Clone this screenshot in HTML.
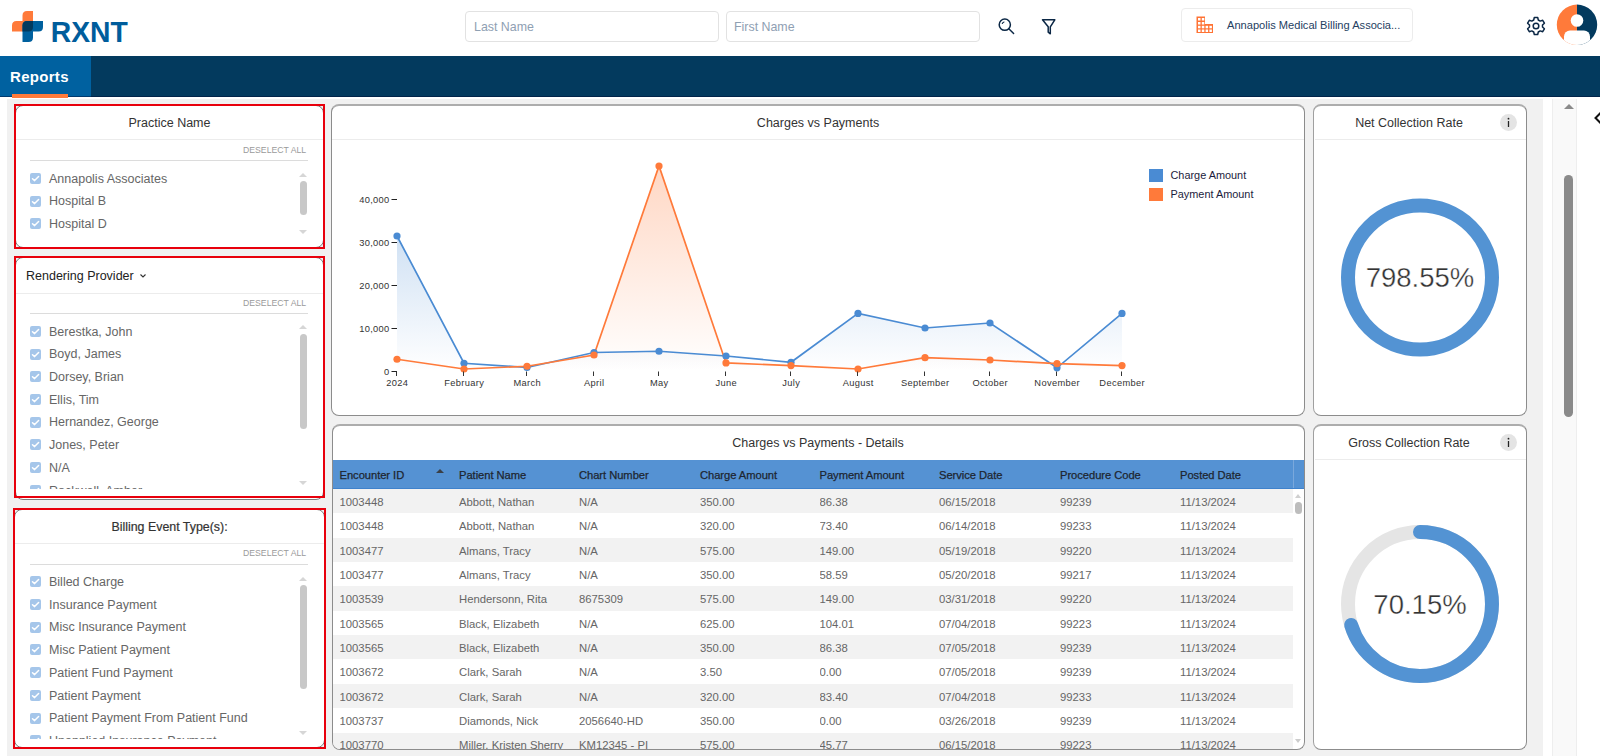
<!DOCTYPE html>
<html><head><meta charset="utf-8">
<style>
*{box-sizing:border-box;margin:0;padding:0}
html,body{width:1600px;height:756px;overflow:hidden;background:#fff;font-family:"Liberation Sans",sans-serif;color:#333;position:relative}
.a{position:absolute}
.t{position:absolute;white-space:nowrap;line-height:1}
#nav{left:0;top:56px;width:1600px;height:41px;background:#033a5e}
#tab{left:0;top:56px;width:91px;height:41px;background:#0061a0}
#content{left:7px;top:99px;width:1536px;height:657px;background:#f1f1f1}
.inp{border:1px solid #e2e2e2;border-radius:4px;background:#fff}
.card{position:absolute;background:#fff;border:1px solid #8c8c8c;border-top:2px solid #adadad;border-radius:8px;overflow:hidden}
.sep{position:absolute;height:1px;background:#ececec}
.red{position:absolute;border:2px solid #e8000c}
.ttl{position:absolute;white-space:nowrap;line-height:1;font-size:12.5px;color:#333}
.desel{position:absolute;white-space:nowrap;line-height:1;font-size:8.7px;color:#9a9a9a}
.cb{position:absolute;width:11px;height:11px;border-radius:2px;background:#a5c6ea}
.cb svg{position:absolute;left:0;top:0}
.li{position:absolute;white-space:nowrap;line-height:1;font-size:12.5px;color:#666}
.sbt{position:absolute;width:7px;border-radius:4px;background:#c8c8c8}
.arr{position:absolute;width:0;height:0;border-left:4px solid transparent;border-right:4px solid transparent}
.up{border-bottom:4px solid #d6d6d6}
.dn{border-top:4px solid #d6d6d6}
</style></head><body>
<!-- header -->
<svg class="a" style="left:0;top:0" width="140" height="56" viewBox="0 0 140 56">
  <path d="M22.5 15.5 Q22.5 11 27 11 H33 V27 Q33 31.6 28.5 31.6 H12 V25.5 Q12 21 16.5 21 H22.5 Z" fill="#ff7a3a"/>
  <path d="M22.5 25.5 Q22.5 21 27 21 H43 V27 Q43 31.6 38.5 31.6 H33 V37.5 Q33 42 28.5 42 H22.5 Z" fill="#00609e"/>
  <path d="M22.5 25.5 Q22.5 21 27 21 H33 V27 Q33 31.6 28.5 31.6 H22.5 Z" fill="#033a5e"/>
  <text transform="translate(50.8 42) scale(1 1.05)" x="0" y="0" font-family="Liberation Sans" font-weight="700" font-size="28.3" fill="#005d9c">RXNT</text>
</svg>
<div class="a inp" style="left:465px;top:11px;width:254px;height:31px"></div>
<div class="t" style="left:474px;top:21px;font-size:12.4px;color:#8fa0b3">Last Name</div>
<div class="a inp" style="left:726px;top:11px;width:254px;height:31px"></div>
<div class="t" style="left:734px;top:21px;font-size:12.4px;color:#8fa0b3">First Name</div>
<svg class="a" style="left:995px;top:15px" width="24" height="24" viewBox="0 0 24 24">
  <circle cx="9.8" cy="9.7" r="5.6" fill="none" stroke="#0b2745" stroke-width="1.5"/>
  <path d="M13.8 13.8 L18.6 18.5" stroke="#0b2745" stroke-width="1.5" stroke-linecap="round"/>
  <path d="M7.3 8.5 Q7.8 7.3 9 7" fill="none" stroke="#0b2745" stroke-width="1.1" stroke-linecap="round"/>
</svg>
<svg class="a" style="left:1038px;top:15px" width="24" height="24" viewBox="0 0 24 24">
  <path d="M4.5 4.8 H16.8 L12.3 11.8 V18.8 L10.2 17.2 V11.8 Z" fill="none" stroke="#0b2745" stroke-width="1.5" stroke-linejoin="round"/>
</svg>
<div class="a inp" style="left:1181px;top:8px;width:232px;height:34px;border-color:#ececec"></div>
<svg class="a" style="left:1196px;top:16px" width="18" height="18" viewBox="0 0 18 18">
  <path d="M0.5 0.5 H9 V8 H17 V17 H0.5 Z" fill="#ff7334"/>
  <g fill="#fff">
    <rect x="2" y="2" width="2.5" height="2.5"/><rect x="5.8" y="2" width="2.5" height="2.5"/>
    <rect x="2" y="6" width="2.5" height="2.5"/><rect x="5.8" y="6" width="2.5" height="2.5"/>
    <rect x="2" y="9.8" width="2.5" height="2.5"/><rect x="5.8" y="9.8" width="2.5" height="2.5"/><rect x="9.6" y="9.8" width="2.5" height="2.5"/><rect x="13.4" y="9.8" width="2.5" height="2.5"/>
    <rect x="2" y="13.5" width="2.5" height="2.5"/><rect x="5.8" y="13.5" width="2.5" height="2.5"/><rect x="9.6" y="13.5" width="2.5" height="2.5"/><rect x="13.4" y="13.5" width="2.5" height="2.5"/>
  </g>
</svg>
<div class="t" style="left:1227px;top:20px;font-size:11.1px;color:#24405f">Annapolis Medical Billing Associa...</div>
<svg class="a" style="left:1524px;top:14px" width="24" height="24" viewBox="0 0 24 24">
  <g fill="none" stroke="#0b2745" stroke-width="1.5" stroke-linejoin="round">
    <path d="M10.3 3.5 H13.7 L14.3 6 L16.2 7.1 L18.7 6.3 L20.4 9.2 L18.5 11 V13 L20.4 14.8 L18.7 17.7 L16.2 16.9 L14.3 18 L13.7 20.5 H10.3 L9.7 18 L7.8 16.9 L5.3 17.7 L3.6 14.8 L5.5 13 V11 L3.6 9.2 L5.3 6.3 L7.8 7.1 L9.7 6 Z"/>
    <circle cx="12" cy="12" r="2.8"/>
  </g>
</svg>
<svg class="a" style="left:1556px;top:4px" width="42" height="42" viewBox="0 0 42 42">
  <defs><clipPath id="avc"><circle cx="21" cy="20.8" r="20.2"/></clipPath></defs>
  <g clip-path="url(#avc)">
    <rect x="0" y="0" width="21" height="42" fill="#ff7a3a"/>
    <rect x="21" y="0" width="21" height="42" fill="#033a5e"/>
    <circle cx="21" cy="16.5" r="6.3" fill="#fff"/>
    <rect x="8" y="26.5" width="26" height="20" rx="6" fill="#fff"/>
  </g>
</svg>
<!-- nav -->
<div class="a" id="nav"></div>
<div class="a" id="tab"></div>
<div class="t" style="left:10px;top:69px;font-size:15px;font-weight:700;color:#fff;letter-spacing:0.3px">Reports</div>
<div class="a" style="left:0;top:95.5px;width:1600px;height:1.5px;background:rgba(0,10,50,0.45)"></div>
<div class="a" style="left:12px;top:94px;width:56px;height:3.5px;background:#ff7a3a"></div>
<!-- content bg -->
<div class="a" id="content"></div>
<div class="a" style="left:1552px;top:99px;width:25px;height:657px;background:#f9f9f9;border-left:1px solid #eeeeee;border-right:1px solid #eeeeee"></div>
<div class="arr up" style="left:1564px;top:104px;border-bottom-color:#8a8a8a;border-left-width:5px;border-right-width:5px;border-bottom-width:5px"></div>
<div class="a" style="left:1564px;top:175px;width:9px;height:242px;border-radius:5px;background:#8a8a8a"></div>
<svg class="a" style="left:1590px;top:110px" width="10" height="16" viewBox="0 0 10 16"><path d="M11 2.5 L5.5 8 L11 13.5" fill="none" stroke="#111" stroke-width="2"/></svg>

<!-- LEFT PANELS -->
<div class="card" style="left:15px;top:105px;width:309px;height:142.5px;border-color:#7d7d7d;border-top-width:1px"></div><div class="ttl" style="left:14px;width:311px;text-align:center;top:117px">Practice Name</div><div class="sep" style="left:16px;top:139.0px;width:307px"></div><div class="desel" style="left:243px;top:145.7px">DESELECT ALL</div><div class="sep" style="left:30px;top:159.9px;width:278px;background:#dcdcdc"></div><div class="a" style="left:14px;top:161px;width:280px;height:77px;overflow:hidden"><div class="cb" style="left:16px;top:11.80px"><svg width="11" height="11" viewBox="0 0 11 11" style="position:absolute;left:0;top:0"><path d="M2.5 5.7 L4.6 7.6 L8.6 3.5" fill="none" stroke="#fff" stroke-width="1.5" stroke-linecap="round" stroke-linejoin="round"/></svg></div><div class="li" style="left:35px;top:11.50px">Annapolis Associates</div><div class="cb" style="left:16px;top:34.50px"><svg width="11" height="11" viewBox="0 0 11 11" style="position:absolute;left:0;top:0"><path d="M2.5 5.7 L4.6 7.6 L8.6 3.5" fill="none" stroke="#fff" stroke-width="1.5" stroke-linecap="round" stroke-linejoin="round"/></svg></div><div class="li" style="left:35px;top:34.20px">Hospital B</div><div class="cb" style="left:16px;top:57.20px"><svg width="11" height="11" viewBox="0 0 11 11" style="position:absolute;left:0;top:0"><path d="M2.5 5.7 L4.6 7.6 L8.6 3.5" fill="none" stroke="#fff" stroke-width="1.5" stroke-linecap="round" stroke-linejoin="round"/></svg></div><div class="li" style="left:35px;top:56.90px">Hospital D</div></div><div class="arr up" style="left:299px;top:173px"></div><div class="arr dn" style="left:299px;top:230px"></div><div class="sbt" style="left:300px;top:181px;height:34px"></div><div class="red" style="left:14px;top:104px;width:311px;height:144.5px"></div><div class="card" style="left:14.5px;top:257px;width:309.5px;height:243px;border-color:#7d7d7d;border-top-width:1px"></div><div class="ttl" style="left:26px;top:270px;color:#222">Rendering Provider</div><svg class="a" style="left:139px;top:273px" width="8" height="6" viewBox="0 0 8 6"><path d="M1.5 1.5 L4 4 L6.5 1.5" fill="none" stroke="#333" stroke-width="1.1"/></svg><div class="sep" style="left:15.5px;top:292.8px;width:307.5px"></div><div class="desel" style="left:243px;top:299px">DESELECT ALL</div><div class="sep" style="left:30px;top:313.0px;width:278px;background:#dcdcdc"></div><div class="a" style="left:14px;top:313px;width:280px;height:175.60000000000002px;overflow:hidden"><div class="cb" style="left:16px;top:12.90px"><svg width="11" height="11" viewBox="0 0 11 11" style="position:absolute;left:0;top:0"><path d="M2.5 5.7 L4.6 7.6 L8.6 3.5" fill="none" stroke="#fff" stroke-width="1.5" stroke-linecap="round" stroke-linejoin="round"/></svg></div><div class="li" style="left:35px;top:12.60px">Berestka, John</div><div class="cb" style="left:16px;top:35.60px"><svg width="11" height="11" viewBox="0 0 11 11" style="position:absolute;left:0;top:0"><path d="M2.5 5.7 L4.6 7.6 L8.6 3.5" fill="none" stroke="#fff" stroke-width="1.5" stroke-linecap="round" stroke-linejoin="round"/></svg></div><div class="li" style="left:35px;top:35.30px">Boyd, James</div><div class="cb" style="left:16px;top:58.30px"><svg width="11" height="11" viewBox="0 0 11 11" style="position:absolute;left:0;top:0"><path d="M2.5 5.7 L4.6 7.6 L8.6 3.5" fill="none" stroke="#fff" stroke-width="1.5" stroke-linecap="round" stroke-linejoin="round"/></svg></div><div class="li" style="left:35px;top:58.00px">Dorsey, Brian</div><div class="cb" style="left:16px;top:81.00px"><svg width="11" height="11" viewBox="0 0 11 11" style="position:absolute;left:0;top:0"><path d="M2.5 5.7 L4.6 7.6 L8.6 3.5" fill="none" stroke="#fff" stroke-width="1.5" stroke-linecap="round" stroke-linejoin="round"/></svg></div><div class="li" style="left:35px;top:80.70px">Ellis, Tim</div><div class="cb" style="left:16px;top:103.70px"><svg width="11" height="11" viewBox="0 0 11 11" style="position:absolute;left:0;top:0"><path d="M2.5 5.7 L4.6 7.6 L8.6 3.5" fill="none" stroke="#fff" stroke-width="1.5" stroke-linecap="round" stroke-linejoin="round"/></svg></div><div class="li" style="left:35px;top:103.40px">Hernandez, George</div><div class="cb" style="left:16px;top:126.40px"><svg width="11" height="11" viewBox="0 0 11 11" style="position:absolute;left:0;top:0"><path d="M2.5 5.7 L4.6 7.6 L8.6 3.5" fill="none" stroke="#fff" stroke-width="1.5" stroke-linecap="round" stroke-linejoin="round"/></svg></div><div class="li" style="left:35px;top:126.10px">Jones, Peter</div><div class="cb" style="left:16px;top:149.10px"><svg width="11" height="11" viewBox="0 0 11 11" style="position:absolute;left:0;top:0"><path d="M2.5 5.7 L4.6 7.6 L8.6 3.5" fill="none" stroke="#fff" stroke-width="1.5" stroke-linecap="round" stroke-linejoin="round"/></svg></div><div class="li" style="left:35px;top:148.80px">N/A</div><div class="cb" style="left:16px;top:171.80px"><svg width="11" height="11" viewBox="0 0 11 11" style="position:absolute;left:0;top:0"><path d="M2.5 5.7 L4.6 7.6 L8.6 3.5" fill="none" stroke="#fff" stroke-width="1.5" stroke-linecap="round" stroke-linejoin="round"/></svg></div><div class="li" style="left:35px;top:171.50px">Rockwell, Amber</div><div class="cb" style="left:16px;top:194.50px"><svg width="11" height="11" viewBox="0 0 11 11" style="position:absolute;left:0;top:0"><path d="M2.5 5.7 L4.6 7.6 L8.6 3.5" fill="none" stroke="#fff" stroke-width="1.5" stroke-linecap="round" stroke-linejoin="round"/></svg></div><div class="li" style="left:35px;top:194.20px">Smith, John</div></div><div class="arr up" style="left:299px;top:325px"></div><div class="arr dn" style="left:299px;top:480.6px"></div><div class="sbt" style="left:300px;top:334px;height:95px"></div><div class="red" style="left:13.5px;top:256px;width:311.5px;height:242px"></div><div class="card" style="left:14px;top:509px;width:311px;height:239px;border-color:#7d7d7d;border-top-width:1px"></div><div class="ttl" style="left:13px;width:313px;text-align:center;top:520.7px;font-size:12.4px;-webkit-text-stroke:0.2px #333">Billing Event Type(s):</div><div class="sep" style="left:15px;top:542.7px;width:309px"></div><div class="desel" style="left:243px;top:549.1px">DESELECT ALL</div><div class="sep" style="left:30px;top:563.5px;width:278px;background:#dcdcdc"></div><div class="a" style="left:14px;top:565px;width:280px;height:174px;overflow:hidden"><div class="cb" style="left:16px;top:11.30px"><svg width="11" height="11" viewBox="0 0 11 11" style="position:absolute;left:0;top:0"><path d="M2.5 5.7 L4.6 7.6 L8.6 3.5" fill="none" stroke="#fff" stroke-width="1.5" stroke-linecap="round" stroke-linejoin="round"/></svg></div><div class="li" style="left:35px;top:11.00px">Billed Charge</div><div class="cb" style="left:16px;top:34.00px"><svg width="11" height="11" viewBox="0 0 11 11" style="position:absolute;left:0;top:0"><path d="M2.5 5.7 L4.6 7.6 L8.6 3.5" fill="none" stroke="#fff" stroke-width="1.5" stroke-linecap="round" stroke-linejoin="round"/></svg></div><div class="li" style="left:35px;top:33.70px">Insurance Payment</div><div class="cb" style="left:16px;top:56.70px"><svg width="11" height="11" viewBox="0 0 11 11" style="position:absolute;left:0;top:0"><path d="M2.5 5.7 L4.6 7.6 L8.6 3.5" fill="none" stroke="#fff" stroke-width="1.5" stroke-linecap="round" stroke-linejoin="round"/></svg></div><div class="li" style="left:35px;top:56.40px">Misc Insurance Payment</div><div class="cb" style="left:16px;top:79.40px"><svg width="11" height="11" viewBox="0 0 11 11" style="position:absolute;left:0;top:0"><path d="M2.5 5.7 L4.6 7.6 L8.6 3.5" fill="none" stroke="#fff" stroke-width="1.5" stroke-linecap="round" stroke-linejoin="round"/></svg></div><div class="li" style="left:35px;top:79.10px">Misc Patient Payment</div><div class="cb" style="left:16px;top:102.10px"><svg width="11" height="11" viewBox="0 0 11 11" style="position:absolute;left:0;top:0"><path d="M2.5 5.7 L4.6 7.6 L8.6 3.5" fill="none" stroke="#fff" stroke-width="1.5" stroke-linecap="round" stroke-linejoin="round"/></svg></div><div class="li" style="left:35px;top:101.80px">Patient Fund Payment</div><div class="cb" style="left:16px;top:124.80px"><svg width="11" height="11" viewBox="0 0 11 11" style="position:absolute;left:0;top:0"><path d="M2.5 5.7 L4.6 7.6 L8.6 3.5" fill="none" stroke="#fff" stroke-width="1.5" stroke-linecap="round" stroke-linejoin="round"/></svg></div><div class="li" style="left:35px;top:124.50px">Patient Payment</div><div class="cb" style="left:16px;top:147.50px"><svg width="11" height="11" viewBox="0 0 11 11" style="position:absolute;left:0;top:0"><path d="M2.5 5.7 L4.6 7.6 L8.6 3.5" fill="none" stroke="#fff" stroke-width="1.5" stroke-linecap="round" stroke-linejoin="round"/></svg></div><div class="li" style="left:35px;top:147.20px">Patient Payment From Patient Fund</div><div class="cb" style="left:16px;top:170.20px"><svg width="11" height="11" viewBox="0 0 11 11" style="position:absolute;left:0;top:0"><path d="M2.5 5.7 L4.6 7.6 L8.6 3.5" fill="none" stroke="#fff" stroke-width="1.5" stroke-linecap="round" stroke-linejoin="round"/></svg></div><div class="li" style="left:35px;top:169.90px">Unapplied Insurance Payment</div><div class="cb" style="left:16px;top:192.90px"><svg width="11" height="11" viewBox="0 0 11 11" style="position:absolute;left:0;top:0"><path d="M2.5 5.7 L4.6 7.6 L8.6 3.5" fill="none" stroke="#fff" stroke-width="1.5" stroke-linecap="round" stroke-linejoin="round"/></svg></div><div class="li" style="left:35px;top:192.60px">Other</div></div><div class="arr up" style="left:299px;top:577px"></div><div class="arr dn" style="left:299px;top:731px"></div><div class="sbt" style="left:300px;top:585px;height:104px"></div><div class="red" style="left:13px;top:508px;width:313px;height:241px"></div>
<!-- CHART CARD -->
<div class="card" style="left:331px;top:104px;width:974px;height:312px"></div><div class="ttl" style="left:331px;width:974px;text-align:center;top:117px">Charges vs Payments</div><div class="sep" style="left:332px;top:139px;width:972px"></div><svg class="a" style="left:0;top:0" width="1600" height="756" viewBox="0 0 1600 756"><defs><linearGradient id="gb" x1="0" y1="0" x2="0" y2="1"><stop offset="0" stop-color="#4a8bd3" stop-opacity="0.26"/><stop offset="1" stop-color="#4a8bd3" stop-opacity="0"/></linearGradient><linearGradient id="go" x1="0" y1="0" x2="0" y2="1"><stop offset="0" stop-color="#ff7a3a" stop-opacity="0.3"/><stop offset="1" stop-color="#ff7a3a" stop-opacity="0"/></linearGradient></defs><polygon points="397,371 397,236 464,363.25 527,367.5 594,352.5 659,351.25 726,356 791,362.3 858,313.4 925,328 990,323 1057,367.8 1122,313.4 1122,371" fill="url(#gb)"/><polygon points="397,371 397,359.25 464,369 527,366.25 594,355 659,166 726,362.9 791,365.6 858,369 925,357.7 990,360 1057,363.7 1122,365.6 1122,371" fill="url(#go)"/><polyline points="397,236 464,363.25 527,367.5 594,352.5 659,351.25 726,356 791,362.3 858,313.4 925,328 990,323 1057,367.8 1122,313.4" fill="none" stroke="#4a8bd3" stroke-width="1.7"/><polyline points="397,359.25 464,369 527,366.25 594,355 659,166 726,362.9 791,365.6 858,369 925,357.7 990,360 1057,363.7 1122,365.6" fill="none" stroke="#ff7a3a" stroke-width="1.7"/><circle cx="397" cy="236" r="3.6" fill="#4a8bd3"/><circle cx="464" cy="363.25" r="3.6" fill="#4a8bd3"/><circle cx="527" cy="367.5" r="3.6" fill="#4a8bd3"/><circle cx="594" cy="352.5" r="3.6" fill="#4a8bd3"/><circle cx="659" cy="351.25" r="3.6" fill="#4a8bd3"/><circle cx="726" cy="356" r="3.6" fill="#4a8bd3"/><circle cx="791" cy="362.3" r="3.6" fill="#4a8bd3"/><circle cx="858" cy="313.4" r="3.6" fill="#4a8bd3"/><circle cx="925" cy="328" r="3.6" fill="#4a8bd3"/><circle cx="990" cy="323" r="3.6" fill="#4a8bd3"/><circle cx="1057" cy="367.8" r="3.6" fill="#4a8bd3"/><circle cx="1122" cy="313.4" r="3.6" fill="#4a8bd3"/><circle cx="397" cy="359.25" r="3.6" fill="#ff7a3a"/><circle cx="464" cy="369" r="3.6" fill="#ff7a3a"/><circle cx="527" cy="366.25" r="3.6" fill="#ff7a3a"/><circle cx="594" cy="355" r="3.6" fill="#ff7a3a"/><circle cx="659" cy="166" r="3.6" fill="#ff7a3a"/><circle cx="726" cy="362.9" r="3.6" fill="#ff7a3a"/><circle cx="791" cy="365.6" r="3.6" fill="#ff7a3a"/><circle cx="858" cy="369" r="3.6" fill="#ff7a3a"/><circle cx="925" cy="357.7" r="3.6" fill="#ff7a3a"/><circle cx="990" cy="360" r="3.6" fill="#ff7a3a"/><circle cx="1057" cy="363.7" r="3.6" fill="#ff7a3a"/><circle cx="1122" cy="365.6" r="3.6" fill="#ff7a3a"/><line x1="391.5" y1="371.5" x2="397" y2="371.5" stroke="#222" stroke-width="1"/><text x="389.5" y="374.55" text-anchor="end" font-family="Liberation Sans" font-size="9.3" letter-spacing="0.3" fill="#333">0</text><line x1="391.5" y1="328.5" x2="397" y2="328.5" stroke="#222" stroke-width="1"/><text x="389.5" y="331.55" text-anchor="end" font-family="Liberation Sans" font-size="9.3" letter-spacing="0.3" fill="#333">10,000</text><line x1="391.5" y1="285.5" x2="397" y2="285.5" stroke="#222" stroke-width="1"/><text x="389.5" y="288.55" text-anchor="end" font-family="Liberation Sans" font-size="9.3" letter-spacing="0.3" fill="#333">20,000</text><line x1="391.5" y1="242.5" x2="397" y2="242.5" stroke="#222" stroke-width="1"/><text x="389.5" y="245.55" text-anchor="end" font-family="Liberation Sans" font-size="9.3" letter-spacing="0.3" fill="#333">30,000</text><line x1="391.5" y1="199.5" x2="397" y2="199.5" stroke="#222" stroke-width="1"/><text x="389.5" y="202.55" text-anchor="end" font-family="Liberation Sans" font-size="9.3" letter-spacing="0.3" fill="#333">40,000</text><path d="M396.5 371.5 V376" stroke="#222" stroke-width="1"/><line x1="396.5" y1="371.5" x2="396.5" y2="376" stroke="#333" stroke-width="1"/><text x="397.2" y="386" text-anchor="middle" font-family="Liberation Sans" font-size="9.3" letter-spacing="0.35" fill="#333">2024</text><line x1="463.5" y1="371.5" x2="463.5" y2="376" stroke="#333" stroke-width="1"/><text x="464.2" y="386" text-anchor="middle" font-family="Liberation Sans" font-size="9.3" letter-spacing="0.35" fill="#333">February</text><line x1="526.5" y1="371.5" x2="526.5" y2="376" stroke="#333" stroke-width="1"/><text x="527.2" y="386" text-anchor="middle" font-family="Liberation Sans" font-size="9.3" letter-spacing="0.35" fill="#333">March</text><line x1="593.5" y1="371.5" x2="593.5" y2="376" stroke="#333" stroke-width="1"/><text x="594.2" y="386" text-anchor="middle" font-family="Liberation Sans" font-size="9.3" letter-spacing="0.35" fill="#333">April</text><line x1="658.5" y1="371.5" x2="658.5" y2="376" stroke="#333" stroke-width="1"/><text x="659.2" y="386" text-anchor="middle" font-family="Liberation Sans" font-size="9.3" letter-spacing="0.35" fill="#333">May</text><line x1="725.5" y1="371.5" x2="725.5" y2="376" stroke="#333" stroke-width="1"/><text x="726.2" y="386" text-anchor="middle" font-family="Liberation Sans" font-size="9.3" letter-spacing="0.35" fill="#333">June</text><line x1="790.5" y1="371.5" x2="790.5" y2="376" stroke="#333" stroke-width="1"/><text x="791.2" y="386" text-anchor="middle" font-family="Liberation Sans" font-size="9.3" letter-spacing="0.35" fill="#333">July</text><line x1="857.5" y1="371.5" x2="857.5" y2="376" stroke="#333" stroke-width="1"/><text x="858.2" y="386" text-anchor="middle" font-family="Liberation Sans" font-size="9.3" letter-spacing="0.35" fill="#333">August</text><line x1="924.5" y1="371.5" x2="924.5" y2="376" stroke="#333" stroke-width="1"/><text x="925.2" y="386" text-anchor="middle" font-family="Liberation Sans" font-size="9.3" letter-spacing="0.35" fill="#333">September</text><line x1="989.5" y1="371.5" x2="989.5" y2="376" stroke="#333" stroke-width="1"/><text x="990.2" y="386" text-anchor="middle" font-family="Liberation Sans" font-size="9.3" letter-spacing="0.35" fill="#333">October</text><line x1="1056.5" y1="371.5" x2="1056.5" y2="376" stroke="#333" stroke-width="1"/><text x="1057.2" y="386" text-anchor="middle" font-family="Liberation Sans" font-size="9.3" letter-spacing="0.35" fill="#333">November</text><line x1="1121.5" y1="371.5" x2="1121.5" y2="376" stroke="#333" stroke-width="1"/><text x="1122.2" y="386" text-anchor="middle" font-family="Liberation Sans" font-size="9.3" letter-spacing="0.35" fill="#333">December</text><rect x="1149" y="169" width="14" height="13" fill="#4a8bd3"/><rect x="1149" y="188" width="14" height="13" fill="#ff7a3a"/><text x="1170.5" y="179" font-family="Liberation Sans" font-size="10.9" fill="#1c1c3c">Charge Amount</text><text x="1170.5" y="198" font-family="Liberation Sans" font-size="10.9" fill="#1c1c3c">Payment Amount</text></svg>
<!-- NET CARD -->
<div class="card" style="left:1313px;top:104px;width:214px;height:312px;border-left-color:#a0a0a0"></div><div class="ttl" style="left:1314px;width:190px;text-align:center;top:117px">Net Collection Rate</div><div class="a" style="left:1500.0px;top:114.0px;width:17px;height:17px;border-radius:9px;background:#e4e4e4"></div><svg class="a" style="left:1500.0px;top:114.0px" width="17" height="17" viewBox="0 0 17 17"><circle cx="8.5" cy="4.7" r="0.9" fill="#222"/><rect x="7.85" y="6.9" width="1.3" height="6.1" rx="0.3" fill="#222"/></svg><div class="sep" style="left:1315px;top:139px;width:211px"></div><svg class="a" style="left:1320px;top:177px" width="200" height="200" viewBox="0 0 200 200"><circle cx="100" cy="100.5" r="72" fill="none" stroke="#5393d3" stroke-width="14"/></svg><div class="t" style="left:1320px;width:200px;text-align:center;top:264px;font-size:27.5px;color:#333;-webkit-text-stroke:0.35px #fff">798.55%</div>
<!-- TABLE -->
<div class="card" style="left:331.5px;top:424px;width:973px;height:326px"><div class="ttl" style="left:0;width:972px;text-align:center;top:10.5px;left:0;width:971px">Charges vs Payments - Details</div><div class="a" style="left:0;top:34px;width:972px;height:29px;background:#5592d3"></div><div class="t" style="left:7.0px;top:43.7px;font-size:11.2px;color:#1e2630;-webkit-text-stroke:0.25px #1e2630;letter-spacing:-0.05px">Encounter ID</div><div class="t" style="left:126.5px;top:43.7px;font-size:11.2px;color:#1e2630;-webkit-text-stroke:0.25px #1e2630;letter-spacing:-0.05px">Patient Name</div><div class="t" style="left:246.5px;top:43.7px;font-size:11.2px;color:#1e2630;-webkit-text-stroke:0.25px #1e2630;letter-spacing:-0.05px">Chart Number</div><div class="t" style="left:367.5px;top:43.7px;font-size:11.2px;color:#1e2630;-webkit-text-stroke:0.25px #1e2630;letter-spacing:-0.05px">Charge Amount</div><div class="t" style="left:487.0px;top:43.7px;font-size:11.2px;color:#1e2630;-webkit-text-stroke:0.25px #1e2630;letter-spacing:-0.05px">Payment Amount</div><div class="t" style="left:606.5px;top:43.7px;font-size:11.2px;color:#1e2630;-webkit-text-stroke:0.25px #1e2630;letter-spacing:-0.05px">Service Date</div><div class="t" style="left:727.5px;top:43.7px;font-size:11.2px;color:#1e2630;-webkit-text-stroke:0.25px #1e2630;letter-spacing:-0.05px">Procedure Code</div><div class="t" style="left:847.5px;top:43.7px;font-size:11.2px;color:#1e2630;-webkit-text-stroke:0.25px #1e2630;letter-spacing:-0.05px">Posted Date</div><div class="a" style="left:103.5px;top:42.5px;width:0;height:0;border-left:4px solid transparent;border-right:4px solid transparent;border-bottom:4.5px solid #3a3f46"></div><div class="a" style="left:960px;top:34px;width:1px;height:29px;background:#7aa8dc"></div><div class="a" style="left:0;top:62px;width:972px;height:1px;background:#3f82cc"></div><div class="a" style="left:0;top:63.00px;width:960px;height:24.35px;background:#f2f2f2"></div><div class="t" style="left:7.0px;top:70.80px;font-size:11.3px;color:#666;width:116px;overflow:hidden">1003448</div><div class="t" style="left:126.5px;top:70.80px;font-size:11.3px;color:#666;width:116px;overflow:hidden">Abbott, Nathan</div><div class="t" style="left:246.5px;top:70.80px;font-size:11.3px;color:#666;width:116px;overflow:hidden">N/A</div><div class="t" style="left:367.5px;top:70.80px;font-size:11.3px;color:#666;width:116px;overflow:hidden">350.00</div><div class="t" style="left:487.0px;top:70.80px;font-size:11.3px;color:#666;width:116px;overflow:hidden">86.38</div><div class="t" style="left:606.5px;top:70.80px;font-size:11.3px;color:#666;width:116px;overflow:hidden">06/15/2018</div><div class="t" style="left:727.5px;top:70.80px;font-size:11.3px;color:#666;width:116px;overflow:hidden">99239</div><div class="t" style="left:847.5px;top:70.80px;font-size:11.3px;color:#666;width:116px;overflow:hidden">11/13/2024</div><div class="a" style="left:0;top:87.35px;width:960px;height:24.35px;background:#fff"></div><div class="t" style="left:7.0px;top:95.15px;font-size:11.3px;color:#666;width:116px;overflow:hidden">1003448</div><div class="t" style="left:126.5px;top:95.15px;font-size:11.3px;color:#666;width:116px;overflow:hidden">Abbott, Nathan</div><div class="t" style="left:246.5px;top:95.15px;font-size:11.3px;color:#666;width:116px;overflow:hidden">N/A</div><div class="t" style="left:367.5px;top:95.15px;font-size:11.3px;color:#666;width:116px;overflow:hidden">320.00</div><div class="t" style="left:487.0px;top:95.15px;font-size:11.3px;color:#666;width:116px;overflow:hidden">73.40</div><div class="t" style="left:606.5px;top:95.15px;font-size:11.3px;color:#666;width:116px;overflow:hidden">06/14/2018</div><div class="t" style="left:727.5px;top:95.15px;font-size:11.3px;color:#666;width:116px;overflow:hidden">99233</div><div class="t" style="left:847.5px;top:95.15px;font-size:11.3px;color:#666;width:116px;overflow:hidden">11/13/2024</div><div class="a" style="left:0;top:111.70px;width:960px;height:24.35px;background:#f2f2f2"></div><div class="t" style="left:7.0px;top:119.50px;font-size:11.3px;color:#666;width:116px;overflow:hidden">1003477</div><div class="t" style="left:126.5px;top:119.50px;font-size:11.3px;color:#666;width:116px;overflow:hidden">Almans, Tracy</div><div class="t" style="left:246.5px;top:119.50px;font-size:11.3px;color:#666;width:116px;overflow:hidden">N/A</div><div class="t" style="left:367.5px;top:119.50px;font-size:11.3px;color:#666;width:116px;overflow:hidden">575.00</div><div class="t" style="left:487.0px;top:119.50px;font-size:11.3px;color:#666;width:116px;overflow:hidden">149.00</div><div class="t" style="left:606.5px;top:119.50px;font-size:11.3px;color:#666;width:116px;overflow:hidden">05/19/2018</div><div class="t" style="left:727.5px;top:119.50px;font-size:11.3px;color:#666;width:116px;overflow:hidden">99220</div><div class="t" style="left:847.5px;top:119.50px;font-size:11.3px;color:#666;width:116px;overflow:hidden">11/13/2024</div><div class="a" style="left:0;top:136.05px;width:960px;height:24.35px;background:#fff"></div><div class="t" style="left:7.0px;top:143.85px;font-size:11.3px;color:#666;width:116px;overflow:hidden">1003477</div><div class="t" style="left:126.5px;top:143.85px;font-size:11.3px;color:#666;width:116px;overflow:hidden">Almans, Tracy</div><div class="t" style="left:246.5px;top:143.85px;font-size:11.3px;color:#666;width:116px;overflow:hidden">N/A</div><div class="t" style="left:367.5px;top:143.85px;font-size:11.3px;color:#666;width:116px;overflow:hidden">350.00</div><div class="t" style="left:487.0px;top:143.85px;font-size:11.3px;color:#666;width:116px;overflow:hidden">58.59</div><div class="t" style="left:606.5px;top:143.85px;font-size:11.3px;color:#666;width:116px;overflow:hidden">05/20/2018</div><div class="t" style="left:727.5px;top:143.85px;font-size:11.3px;color:#666;width:116px;overflow:hidden">99217</div><div class="t" style="left:847.5px;top:143.85px;font-size:11.3px;color:#666;width:116px;overflow:hidden">11/13/2024</div><div class="a" style="left:0;top:160.40px;width:960px;height:24.35px;background:#f2f2f2"></div><div class="t" style="left:7.0px;top:168.20px;font-size:11.3px;color:#666;width:116px;overflow:hidden">1003539</div><div class="t" style="left:126.5px;top:168.20px;font-size:11.3px;color:#666;width:116px;overflow:hidden">Hendersonn, Rita</div><div class="t" style="left:246.5px;top:168.20px;font-size:11.3px;color:#666;width:116px;overflow:hidden">8675309</div><div class="t" style="left:367.5px;top:168.20px;font-size:11.3px;color:#666;width:116px;overflow:hidden">575.00</div><div class="t" style="left:487.0px;top:168.20px;font-size:11.3px;color:#666;width:116px;overflow:hidden">149.00</div><div class="t" style="left:606.5px;top:168.20px;font-size:11.3px;color:#666;width:116px;overflow:hidden">03/31/2018</div><div class="t" style="left:727.5px;top:168.20px;font-size:11.3px;color:#666;width:116px;overflow:hidden">99220</div><div class="t" style="left:847.5px;top:168.20px;font-size:11.3px;color:#666;width:116px;overflow:hidden">11/13/2024</div><div class="a" style="left:0;top:184.75px;width:960px;height:24.35px;background:#fff"></div><div class="t" style="left:7.0px;top:192.55px;font-size:11.3px;color:#666;width:116px;overflow:hidden">1003565</div><div class="t" style="left:126.5px;top:192.55px;font-size:11.3px;color:#666;width:116px;overflow:hidden">Black, Elizabeth</div><div class="t" style="left:246.5px;top:192.55px;font-size:11.3px;color:#666;width:116px;overflow:hidden">N/A</div><div class="t" style="left:367.5px;top:192.55px;font-size:11.3px;color:#666;width:116px;overflow:hidden">625.00</div><div class="t" style="left:487.0px;top:192.55px;font-size:11.3px;color:#666;width:116px;overflow:hidden">104.01</div><div class="t" style="left:606.5px;top:192.55px;font-size:11.3px;color:#666;width:116px;overflow:hidden">07/04/2018</div><div class="t" style="left:727.5px;top:192.55px;font-size:11.3px;color:#666;width:116px;overflow:hidden">99223</div><div class="t" style="left:847.5px;top:192.55px;font-size:11.3px;color:#666;width:116px;overflow:hidden">11/13/2024</div><div class="a" style="left:0;top:209.10px;width:960px;height:24.35px;background:#f2f2f2"></div><div class="t" style="left:7.0px;top:216.90px;font-size:11.3px;color:#666;width:116px;overflow:hidden">1003565</div><div class="t" style="left:126.5px;top:216.90px;font-size:11.3px;color:#666;width:116px;overflow:hidden">Black, Elizabeth</div><div class="t" style="left:246.5px;top:216.90px;font-size:11.3px;color:#666;width:116px;overflow:hidden">N/A</div><div class="t" style="left:367.5px;top:216.90px;font-size:11.3px;color:#666;width:116px;overflow:hidden">350.00</div><div class="t" style="left:487.0px;top:216.90px;font-size:11.3px;color:#666;width:116px;overflow:hidden">86.38</div><div class="t" style="left:606.5px;top:216.90px;font-size:11.3px;color:#666;width:116px;overflow:hidden">07/05/2018</div><div class="t" style="left:727.5px;top:216.90px;font-size:11.3px;color:#666;width:116px;overflow:hidden">99239</div><div class="t" style="left:847.5px;top:216.90px;font-size:11.3px;color:#666;width:116px;overflow:hidden">11/13/2024</div><div class="a" style="left:0;top:233.45px;width:960px;height:24.35px;background:#fff"></div><div class="t" style="left:7.0px;top:241.25px;font-size:11.3px;color:#666;width:116px;overflow:hidden">1003672</div><div class="t" style="left:126.5px;top:241.25px;font-size:11.3px;color:#666;width:116px;overflow:hidden">Clark, Sarah</div><div class="t" style="left:246.5px;top:241.25px;font-size:11.3px;color:#666;width:116px;overflow:hidden">N/A</div><div class="t" style="left:367.5px;top:241.25px;font-size:11.3px;color:#666;width:116px;overflow:hidden">3.50</div><div class="t" style="left:487.0px;top:241.25px;font-size:11.3px;color:#666;width:116px;overflow:hidden">0.00</div><div class="t" style="left:606.5px;top:241.25px;font-size:11.3px;color:#666;width:116px;overflow:hidden">07/05/2018</div><div class="t" style="left:727.5px;top:241.25px;font-size:11.3px;color:#666;width:116px;overflow:hidden">99239</div><div class="t" style="left:847.5px;top:241.25px;font-size:11.3px;color:#666;width:116px;overflow:hidden">11/13/2024</div><div class="a" style="left:0;top:257.80px;width:960px;height:24.35px;background:#f2f2f2"></div><div class="t" style="left:7.0px;top:265.60px;font-size:11.3px;color:#666;width:116px;overflow:hidden">1003672</div><div class="t" style="left:126.5px;top:265.60px;font-size:11.3px;color:#666;width:116px;overflow:hidden">Clark, Sarah</div><div class="t" style="left:246.5px;top:265.60px;font-size:11.3px;color:#666;width:116px;overflow:hidden">N/A</div><div class="t" style="left:367.5px;top:265.60px;font-size:11.3px;color:#666;width:116px;overflow:hidden">320.00</div><div class="t" style="left:487.0px;top:265.60px;font-size:11.3px;color:#666;width:116px;overflow:hidden">83.40</div><div class="t" style="left:606.5px;top:265.60px;font-size:11.3px;color:#666;width:116px;overflow:hidden">07/04/2018</div><div class="t" style="left:727.5px;top:265.60px;font-size:11.3px;color:#666;width:116px;overflow:hidden">99233</div><div class="t" style="left:847.5px;top:265.60px;font-size:11.3px;color:#666;width:116px;overflow:hidden">11/13/2024</div><div class="a" style="left:0;top:282.15px;width:960px;height:24.35px;background:#fff"></div><div class="t" style="left:7.0px;top:289.95px;font-size:11.3px;color:#666;width:116px;overflow:hidden">1003737</div><div class="t" style="left:126.5px;top:289.95px;font-size:11.3px;color:#666;width:116px;overflow:hidden">Diamonds, Nick</div><div class="t" style="left:246.5px;top:289.95px;font-size:11.3px;color:#666;width:116px;overflow:hidden">2056640-HD</div><div class="t" style="left:367.5px;top:289.95px;font-size:11.3px;color:#666;width:116px;overflow:hidden">350.00</div><div class="t" style="left:487.0px;top:289.95px;font-size:11.3px;color:#666;width:116px;overflow:hidden">0.00</div><div class="t" style="left:606.5px;top:289.95px;font-size:11.3px;color:#666;width:116px;overflow:hidden">03/26/2018</div><div class="t" style="left:727.5px;top:289.95px;font-size:11.3px;color:#666;width:116px;overflow:hidden">99239</div><div class="t" style="left:847.5px;top:289.95px;font-size:11.3px;color:#666;width:116px;overflow:hidden">11/13/2024</div><div class="a" style="left:0;top:306.50px;width:960px;height:24.35px;background:#f2f2f2"></div><div class="t" style="left:7.0px;top:314.30px;font-size:11.3px;color:#666;width:116px;overflow:hidden">1003770</div><div class="t" style="left:126.5px;top:314.30px;font-size:11.3px;color:#666;width:116px;overflow:hidden">Miller, Kristen Sherry</div><div class="t" style="left:246.5px;top:314.30px;font-size:11.3px;color:#666;width:116px;overflow:hidden">KM12345 - PI</div><div class="t" style="left:367.5px;top:314.30px;font-size:11.3px;color:#666;width:116px;overflow:hidden">575.00</div><div class="t" style="left:487.0px;top:314.30px;font-size:11.3px;color:#666;width:116px;overflow:hidden">45.77</div><div class="t" style="left:606.5px;top:314.30px;font-size:11.3px;color:#666;width:116px;overflow:hidden">06/15/2018</div><div class="t" style="left:727.5px;top:314.30px;font-size:11.3px;color:#666;width:116px;overflow:hidden">99223</div><div class="t" style="left:847.5px;top:314.30px;font-size:11.3px;color:#666;width:116px;overflow:hidden">11/13/2024</div><div class="a" style="left:962px;top:68px;width:0;height:0;border-left:3.5px solid transparent;border-right:3.5px solid transparent;border-bottom:4px solid #d0d0d0"></div><div class="a" style="left:962px;top:76px;width:7px;height:12px;border-radius:3.5px;background:#bdbdbd"></div><div class="a" style="left:962px;top:313px;width:0;height:0;border-left:3.5px solid transparent;border-right:3.5px solid transparent;border-top:4px solid #ccc"></div></div>
<!-- GROSS -->
<div class="card" style="left:1313px;top:424px;width:214px;height:326px;border-left-color:#a0a0a0"></div><div class="ttl" style="left:1314px;width:190px;text-align:center;top:437px">Gross Collection Rate</div><div class="a" style="left:1500.0px;top:434.0px;width:17px;height:17px;border-radius:9px;background:#e4e4e4"></div><svg class="a" style="left:1500.0px;top:434.0px" width="17" height="17" viewBox="0 0 17 17"><circle cx="8.5" cy="4.7" r="0.9" fill="#222"/><rect x="7.85" y="6.9" width="1.3" height="6.1" rx="0.3" fill="#222"/></svg><div class="sep" style="left:1315px;top:459px;width:211px"></div><svg class="a" style="left:1320px;top:504px" width="200" height="200" viewBox="0 0 200 200"><circle cx="100" cy="100" r="72" fill="none" stroke="#e5e5e5" stroke-width="14"/><circle cx="100" cy="100" r="72" fill="none" stroke="#5393d3" stroke-width="14" stroke-linecap="round" stroke-dasharray="317.35 452.39" transform="rotate(-90 100 100)"/></svg><div class="t" style="left:1320px;width:200px;text-align:center;top:591px;font-size:27.5px;color:#333;-webkit-text-stroke:0.35px #fff">70.15%</div>
</body></html>
